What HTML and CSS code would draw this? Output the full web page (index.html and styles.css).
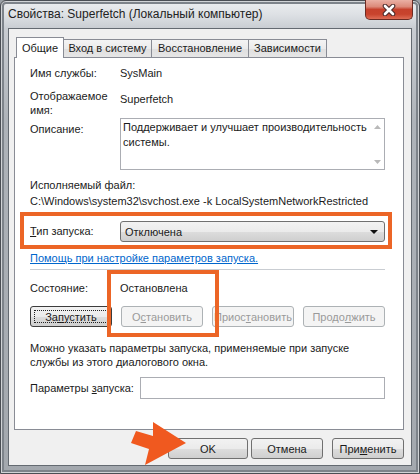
FILE: index.html
```html
<!DOCTYPE html>
<html lang="ru">
<head>
<meta charset="utf-8">
<title>Свойства: Superfetch</title>
<link rel="stylesheet" href="styles.css">
</head>
<body>
<div class="window">
  <div class="titlebar">
    <span class="title">Свойства: Superfetch (Локальный компьютер)</span>
    <div class="close">
      <svg width="14" height="12" viewBox="0 0 14 12">
        <path d="M3 2 L11 10 M11 2 L3 10" stroke="#4a2a2a" stroke-width="4.6" stroke-linecap="round"/>
        <path d="M3 2 L11 10 M11 2 L3 10" stroke="#ffffff" stroke-width="2.6" stroke-linecap="round"/>
      </svg>
    </div>
  </div>
  <div class="client">
    <div class="tabs">
      <div class="tab active t1">Общие</div>
      <div class="tab t2">Вход в систему</div>
      <div class="tab t3">Восстановление</div>
      <div class="tab t4">Зависимости</div>
    </div>
    <div class="panel">
      <div class="row r-name">
        <div class="label">Имя службы:</div>
        <div class="value">SysMain</div>
      </div>
      <div class="row r-display">
        <div class="label two">Отображаемое<br>имя:</div>
        <div class="value v-display">Superfetch</div>
      </div>
      <div class="row r-desc">
        <div class="label l-desc">Описание:</div>
        <div class="desc-box">
          <div class="desc-text">Поддерживает и улучшает производительность системы.</div>
          <div class="scroll">
            <svg width="7" height="4" viewBox="0 0 7 4"><path d="M0 4 L3.5 0 L7 4 Z" fill="#b9b9b9"/></svg>
            <svg width="7" height="4" viewBox="0 0 7 4"><path d="M0 0 L3.5 4 L7 0 Z" fill="#b9b9b9"/></svg>
          </div>
        </div>
      </div>
      <div class="line exe-label">Исполняемый файл:</div>
      <div class="line exe-path">C:\Windows\system32\svchost.exe -k LocalSystemNetworkRestricted</div>
      <div class="row startup mark">
        <div class="label"><u>Т</u>ип запуска:</div>
        <div class="combo">
          <span>Отключена</span>
          <svg width="8" height="4" viewBox="0 0 8 4"><path d="M0 0 L8 0 L4 4 Z" fill="#111"/></svg>
        </div>
      </div>
      <div class="line link">Помощь при настройке параметров запуска.</div>
      <div class="sep"></div>
      <div class="row r-status">
        <div class="label">Состояние:</div>
        <div class="value">Остановлена</div>
      </div>
      <div class="btn-row">
        <div class="btn focus">За<u>п</u>устить</div>
        <div class="btn disabled">О<u>с</u>тановить</div>
        <div class="btn disabled">Приос<u>т</u>ановить</div>
        <div class="btn disabled">Продо<u>л</u>жить</div>
      </div>
      <div class="note">Можно указать параметры запуска, применяемые при запуске службы из этого диалогового окна.</div>
      <div class="row r-params">
        <div class="label l-params">Параметры <u>з</u>апуска:</div>
        <div class="input"></div>
      </div>
    </div>
    <div class="actions">
      <div class="btn act ok">OK</div>
      <div class="btn act cancel">Отмена</div>
      <div class="btn act apply">При<u>м</u>енить</div>
    </div>
  </div>
  <div class="mark-status"></div>
  <svg class="arrow" width="420" height="474" viewBox="0 0 420 474">
    <path d="M136 431 L153 436 L153 422 L186 443 L145 465 L149 449 L131 443 Z" fill="#f0591f"/>
  </svg>
</div>
</body>
</html>
```
FILE: styles.css
```css
* { box-sizing: border-box; margin: 0; padding: 0; }
html, body { width: 420px; height: 474px; overflow: hidden; }
body {
  font-family: "Liberation Sans", Arial, sans-serif;
  font-size: 11px;
  color: #1b1b1b;
  background: #9aa0a6;
}
u { text-decoration: underline; text-underline-offset: 1px; }

.window {
  position: relative;
  width: 420px;
  height: 474px;
  display: flex;
  flex-direction: column;
  padding: 0 7px 7px 7px;
  border: 1px solid #4a4e54;
  border-radius: 6px 6px 0 0;
  background: linear-gradient(180deg, #eceef0 0px, #dde0e4 14px, #c8ccd1 28px, #aeb3b9 120px, #a3a8ae 474px);
  box-shadow: inset 0 0 0 1px #d0d3d6, inset 0 0 0 3px #7d838a;
}

.titlebar {
  height: 27px;
  display: flex;
  justify-content: space-between;
  align-items: flex-start;
}
.title {
  margin-top: 5px;
  line-height: 16px;
  font-size: 12px;
  color: #222;
}
.close {
  width: 48px;
  height: 20px;
  margin-top: -1px;
  margin-right: -1px;
  border: 1px solid #6b2b23;
  border-top: none;
  border-radius: 0 0 5px 5px;
  background: linear-gradient(180deg, #eab0a4 0%, #dc8a7a 35%, #c6412c 50%, #c8432d 75%, #de6c55 100%);
  display: flex;
  align-items: center;
  justify-content: center;
}

.client {
  flex: 1;
  display: flex;
  flex-direction: column;
  background: #f0f0f0;
  border: 1px solid #646a71;
  padding: 8px 7px 0 5px;
}

.tabs {
  display: flex;
  align-items: flex-end;
  margin-left: 2px;
  margin-bottom: -1px;
  position: relative;
  z-index: 1;
}
.tab {
  height: 18px;
  margin-bottom: 1px;
  border: 1px solid #898c95;
  border-bottom: none;
  margin-left: -1px;
  background: linear-gradient(180deg, #f4f4f4 0%, #ebebeb 50%, #dfdfdf 51%, #e6e6e6 100%);
  text-align: center;
  line-height: 17px;
  white-space: nowrap;
}
.tab.active {
  height: 21px;
  margin-bottom: 0;
  margin-left: 0;
  background: #ffffff;
  line-height: 21px;
  position: relative;
  z-index: 2;
}
.t1 { width: 48px; }
.t2 { width: 89px; }
.t3 { width: 98px; }
.t4 { width: 79px; }

.panel {
  height: 373px;
  background: #ffffff;
  border: 1px solid #898c95;
  padding: 0 18px 0 15px;
  display: flex;
  flex-direction: column;
}

.row { display: flex; }
.label { width: 90px; flex: none; line-height: 15px; }
.value { line-height: 15px; }
.line { line-height: 15px; }

.r-name { margin-top: 8px; }
.r-display { margin-top: 9px; }
.label.two { line-height: 13.5px; }
.v-display { padding-top: 2px; }
.r-desc { margin-top: 1px; }
.l-desc { padding-top: 4px; }
.desc-box {
  width: 265px;
  height: 52px;
  border: 1px solid #abadb3;
  display: flex;
  background: #fff;
}
.desc-text {
  flex: 1;
  padding: 1px 2px;
  line-height: 15px;
}
.scroll {
  width: 14px;
  flex: none;
  display: flex;
  flex-direction: column;
  justify-content: space-between;
  align-items: center;
  padding: 6px 0 5px;
}

.exe-label { margin-top: 8px; }
.exe-path { margin-top: 1px; white-space: nowrap; }

.mark {
  margin: 3px -7px 0 -10px;
  height: 37px;
  border: 4px solid #ec6526;
  padding: 5px 3px 3px 6px;
  align-items: center;
}
.combo {
  flex: 1;
  height: 21px;
  border: 1px solid #707070;
  border-radius: 3px;
  background: linear-gradient(180deg, #f2f2f2 0%, #ebebeb 50%, #dddddd 51%, #cfcfcf 100%);
  display: flex;
  align-items: center;
  justify-content: space-between;
  padding: 0 6px 0 4px;
}

.link {
  margin-top: 2px;
  color: #0066cc;
  text-decoration: underline;
}
.sep {
  margin-top: 3px;
  height: 1px;
  background: #c9cdd2;
}

.r-status { margin-top: 11px; }

.btn-row {
  margin-top: 10px;
  display: flex;
  justify-content: space-between;
}
.btn {
  width: 82px;
  height: 21px;
  border: 1px solid #707070;
  border-radius: 3px;
  background: linear-gradient(180deg, #f2f2f2 0%, #ebebeb 50%, #dddddd 51%, #cfcfcf 100%);
  display: flex;
  align-items: center;
  justify-content: center;
  white-space: nowrap;
  position: relative;
}
.btn.disabled {
  border-color: #adb2b5;
  background: #f4f4f4;
  color: #9a9a9a;
}
.btn.focus { border-color: #3c3c3c; }
.btn.focus::after {
  content: "";
  position: absolute;
  inset: 3px;
  border: 1px dotted #222;
}

.note {
  margin-top: 14px;
  line-height: 14px;
}
.r-params { margin-top: 8px; align-items: center; }
.l-params { width: 110px; }
.input {
  flex: 1;
  height: 22px;
  border: 1px solid #abadb3;
  background: #fff;
}

.actions {
  margin-top: 8px;
  display: flex;
  justify-content: flex-end;
}
.act { height: 21px; }
.ok { width: 80px; }
.cancel { width: 72px; margin-left: 3px; }
.apply { width: 72px; margin-left: 9px; }

.mark-status {
  position: absolute;
  left: 106px;
  top: 269px;
  width: 112px;
  height: 67px;
  border: 4px solid #ec6526;
}
.arrow {
  position: absolute;
  left: -1px;
  top: -1px;
  pointer-events: none;
}
```
